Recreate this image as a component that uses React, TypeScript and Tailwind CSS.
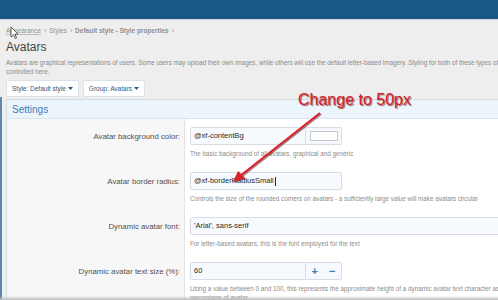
import React from "react";

function Row({ label, explain, children }: { label: string; explain: React.ReactNode; children: React.ReactNode }) {
  return (
    <div className="flex">
      <div className="w-[178px] shrink-0 bg-[#f7f7f7] border-r border-[#e3e3e3] pt-[13px] pr-[4px] text-right text-[7.8px] leading-[9px] text-[#505050]">
        {label}
      </div>
      <div className="flex-1 bg-white pl-[5px] pt-[8px] pb-[6px]">
        {children}
        <div className="mt-[4px] text-[6.3px] leading-[9px] text-[#8c8c8c] whitespace-nowrap">{explain}</div>
      </div>
    </div>
  );
}

function Caret() {
  return (
    <svg className="ml-[2px]" width="5" height="3" viewBox="0 0 5 3">
      <polygon points="0,0 5,0 2.5,3" fill="currentColor" />
    </svg>
  );
}

const inputCls =
  "h-[18px] bg-[#f6f9fd] border border-[#d6dde5] rounded-[2px] flex items-center px-[3px] text-[7.5px] text-[#2b2b2b]";

export default function App() {
  return (
    <div className="relative w-[498px] h-[300px] overflow-hidden bg-[#eeeeee] font-['Liberation_Sans',Arial,sans-serif]">
      {/* header bar */}
      <div className="h-[19px] bg-[#185886]" />
      <div className="h-[2px] bg-gradient-to-b from-[#c9d3dc] to-[#eeeeee]" />

      <div className="flex">
        <div className="w-[2px] shrink-0 mt-[76px] bg-[#5f86ab]" />
        <div className="pl-[4px] w-[560px] shrink-0">
          {/* breadcrumb */}
          <div className="mt-[6px] flex items-center gap-[3px] text-[6.5px] leading-[8px] text-[#8f8f8f]">
            <span className="underline decoration-[#bbbbbb]">Appearance</span>
            <span>›</span>
            <span>Styles</span>
            <span>›</span>
            <span className="font-bold">Default style - Style properties</span>
            <span>›</span>
          </div>
          <div className="mt-[5px] text-[12px] leading-[14px] text-[#444444]">Avatars</div>
          <div className="mt-[4px] text-[6.3px] leading-[9px] text-[#8a8a8a] whitespace-nowrap">
            Avatars are graphical representations of users. Some users may upload their own images, while others will use the default letter-based imagery. Styling for both of these types of avatar is
            <br />
            controlled here.
          </div>
          <div className="mt-[4px] flex gap-[4px]">
            <div className="h-[17px] px-[5px] flex items-center bg-white border border-[#dde2e7] rounded-[2px] text-[6.5px] text-[#35577a]">
              Style: Default style <Caret />
            </div>
            <div className="h-[17px] px-[5px] flex items-center bg-white border border-[#dde2e7] rounded-[2px] text-[6.5px] text-[#35577a]">
              Group: Avatars <Caret />
            </div>
          </div>

          {/* settings panel */}
          <div className="mt-[2px] w-[560px] border border-[#d3dbe3]">
            <div className="h-[19px] bg-[#edf5fc] border-b border-[#dbe4ec] flex items-center pl-[5px] text-[10px] text-[#3e7bb2]">
              Settings
            </div>
            <Row label="Avatar background color:" explain="The basic background of all avatars, graphical and generic">
              <div className="flex">
                <div className={inputCls + " w-[116px] rounded-r-none"}>@xf-contentBg</div>
                <div className="h-[18px] w-[36px] bg-[#f6f9fd] border border-l-0 border-[#d6dde5] rounded-r-[2px] flex items-center justify-center">
                  <div className="w-[28px] h-[10px] bg-white border border-[#c8c8c8]" />
                </div>
              </div>
            </Row>
            <Row
              label="Avatar border radius:"
              explain="Controls the size of the rounded corners on avatars - a sufficiently large value will make avatars circular"
            >
              <div className={inputCls + " w-[152px]"}>
                @xf-borderRadiusSmall<span className="ml-[1px] w-px h-[9px] bg-[#222]" />
              </div>
            </Row>
            <Row label="Dynamic avatar font:" explain="For letter-based avatars, this is the font employed for the text">
              <div className={inputCls + " w-full"}>'Arial', sans-serif</div>
            </Row>
            <Row
              label="Dynamic avatar text size (%):"
              explain={
                <>
                  Using a value between 0 and 100, this represents the approximate height of a dynamic avatar text character as a
                  <br />
                  percentage of avatar.
                </>
              }
            >
              <div className="flex">
                <div className={inputCls + " w-[116px] rounded-r-none"}>60</div>
                <div className="h-[18px] w-[36px] bg-[#f6f9fd] border border-l-0 border-[#d6dde5] rounded-r-[2px] flex items-center justify-around text-[11px] font-bold text-[#3a7ab8]">
                  <span>+</span>
                  <span>−</span>
                </div>
              </div>
            </Row>
          </div>
        </div>
      </div>

      {/* bottom fade */}
      <div className="absolute left-0 right-0 bottom-0 h-[4px] bg-gradient-to-b from-transparent to-[#bdbdbd]" />

      {/* annotation */}
      <div
        className="absolute left-[298px] top-[91px] text-[16px] leading-[18px] text-[#d9202a] whitespace-nowrap"
        style={{ textShadow: "1px 1px 1px rgba(60,0,0,0.6)" }}
      >
        Change to 50px
      </div>
      <svg className="absolute left-0 top-0" width="498" height="300" viewBox="0 0 498 300">
        <defs>
          <filter id="sh" x="-10%" y="-10%" width="120%" height="120%">
            <feDropShadow dx="1" dy="1" stdDeviation="0.6" floodColor="#400000" floodOpacity="0.5" />
          </filter>
        </defs>
        <g filter="url(#sh)">
          <line x1="320" y1="113" x2="240" y2="176" stroke="#d9202a" strokeWidth="2" />
          <polygon points="233,182 238,171 245,178" fill="#d9202a" />
        </g>
        {/* mouse cursor */}
        <path d="M11 27 L11 37 L13.5 34.8 L15.2 38.5 L16.6 37.9 L14.9 34.2 L18 34 Z" fill="#ffffff" stroke="#333" strokeWidth="0.8" />
      </svg>
    </div>
  );
}
